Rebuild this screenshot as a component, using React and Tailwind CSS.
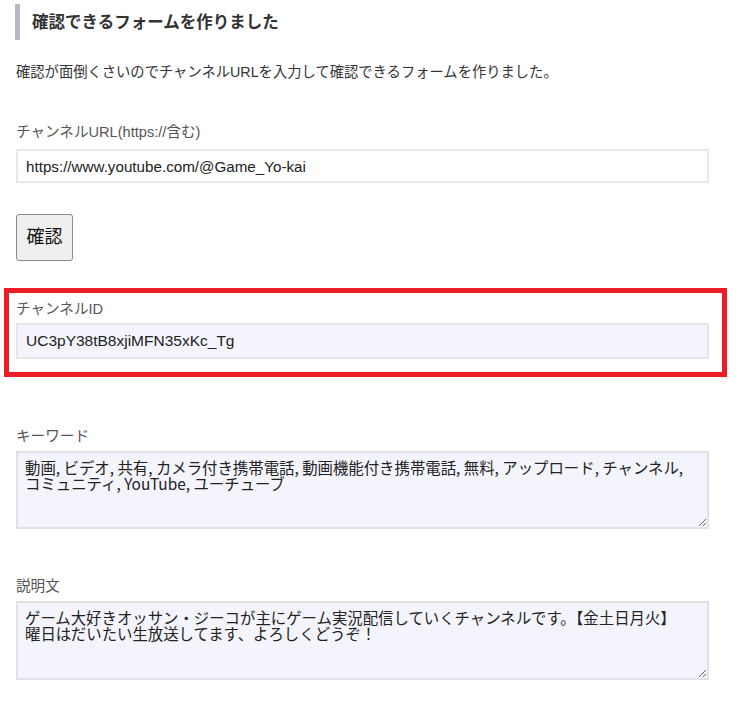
export default function App() {
  const font = { fontFamily: '"Liberation Sans", "Noto Sans CJK JP", sans-serif' };

  const keywords =
    "動画, ビデオ, 共有, カメラ付き携帯電話, 動画機能付き携帯電話, 無料, アップロード, チャンネル,\nコミュニティ, YouTube, ユーチューブ";
  const description =
    "ゲーム大好きオッサン・ジーコが主にゲーム実況配信していくチャンネルです。【金土日月火】\n曜日はだいたい生放送してます、よろしくどうぞ！";

  return (
    <div className="min-h-screen bg-white text-[#333]" style={font}>
      <div className="w-[693px] ml-[16px] pb-[26px]">
        {/* Heading */}
        <div className="mt-[4px] h-[36px] -ml-[1px] border-l-[5px] border-[#b7b7c7] pl-[12px] flex items-center">
          <h2 className="text-[16.5px] font-bold text-[#333] leading-none">
            確認できるフォームを作りました
          </h2>
        </div>

        <p className="mt-[22px] text-[14.3px] leading-[20px] text-[#333]">
          確認が面倒くさいのでチャンネルURLを入力して確認できるフォームを作りました。
        </p>

        {/* Channel URL */}
        <label className="block mt-[40px] text-[14.6px] leading-[20px] text-[#555]">
          チャンネルURL(https://含む)
        </label>
        <input
          type="text"
          defaultValue="https://www.youtube.com/@Game_Yo-kai"
          className="mt-[7px] block w-full h-[34px] border-2 border-[#e8e8e8] bg-white px-[8px] text-[15.2px] text-[#222] outline-none"
          style={font}
        />

        <button
          className="mt-[31px] block w-[57px] h-[47px] rounded-[3px] border border-[#8a8a8a] bg-[#efefef] text-[18px] text-[#111]"
          style={font}
        >
          確認
        </button>

        {/* Channel ID (highlighted) */}
        <div className="mt-[27px] -ml-[12px] w-[723px] border-[5px] border-[#ee1c25] pl-[7px] pr-[13px] pt-[6px] pb-[13px]">
          <label className="block text-[14.6px] leading-[20px] text-[#555]">
            チャンネルID
          </label>
          <input
            type="text"
            readOnly
            value="UC3pY38tB8xjiMFN35xKc_Tg"
            className="mt-[4px] block w-full h-[36px] border-2 border-[#e4e4ea] bg-[#f4f4fd] px-[8px] text-[15.5px] text-[#222] outline-none"
            style={font}
          />
        </div>

        {/* Keywords */}
        <label className="block mt-[49px] text-[14.6px] leading-[20px] text-[#555]">
          キーワード
        </label>
        <textarea
          readOnly
          value={keywords}
          className="mt-[5px] block w-full h-[78px] border-2 border-[#e0e0e6] bg-[#f4f4fd] px-[7px] pt-[6px] text-[15.4px] leading-[16px] text-[#222] outline-none"
          style={{ fontFamily: '"Noto Sans CJK JP", sans-serif' }}
        />

        {/* Description */}
        <label className="block mt-[47px] text-[14.6px] leading-[20px] text-[#555]">
          説明文
        </label>
        <textarea
          readOnly
          value={description}
          className="mt-[5px] block w-full h-[79px] border-2 border-[#e0e0e6] bg-[#f4f4fd] px-[7px] pt-[6px] text-[15.4px] leading-[16px] text-[#222] outline-none"
          style={{ fontFamily: '"Noto Sans CJK JP", sans-serif' }}
        />
      </div>
    </div>
  );
}
